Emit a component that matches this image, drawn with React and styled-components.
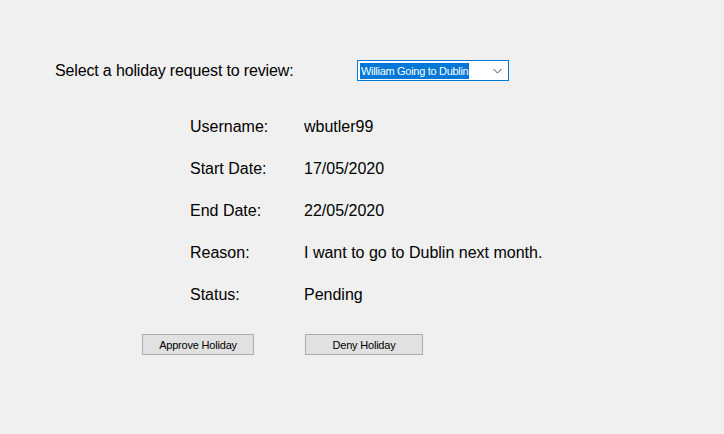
import { Fragment } from "react";
import styled, { createGlobalStyle } from "styled-components";

const GlobalStyle = createGlobalStyle`
  html, body {
    margin: 0;
    padding: 0;
    background: #f0f0f0;
  }
  body {
    font-family: "Liberation Sans", Arial, sans-serif;
    color: #000;
  }
`;

const Form = styled.div`
  width: 724px;
  height: 434px;
  box-sizing: border-box;
  padding: 60px 0 0 55px;
  background: #f0f0f0;
`;

const HeaderRow = styled.div`
  display: flex;
  align-items: center;
  height: 21px;
`;

const Label = styled.span`
  font-size: 16px;
  line-height: 21px;
  white-space: nowrap;
`;

const PromptLabel = styled(Label)`
  width: 302px;
  letter-spacing: -0.15px;
`;

const Combo = styled.div`
  display: flex;
  align-items: center;
  justify-content: space-between;
  width: 152px;
  height: 21px;
  box-sizing: border-box;
  border: 1px solid #0078d7;
  background: #fff;
  padding: 0 6px 0 2px;
`;

const Selected = styled.span`
  background: #0078d7;
  color: #fff;
  font-size: 11px;
  letter-spacing: -0.3px;
  line-height: 16px;
  padding: 0 1px;
  white-space: nowrap;
`;

const Details = styled.div`
  display: grid;
  grid-template-columns: 114px auto;
  grid-auto-rows: 42px;
  align-items: center;
  margin: 24px 0 0 135px;
`;

const ButtonRow = styled.div`
  display: flex;
  gap: 51px;
  margin: 19px 0 0 87px;
`;

const Button = styled.button`
  width: ${(p) => p.$w}px;
  height: 21px;
  box-sizing: border-box;
  border: 1px solid #adadad;
  background: #e1e1e1;
  font-family: "Liberation Sans", Arial, sans-serif;
  font-size: 11px;
  letter-spacing: -0.2px;
  color: #000;
  padding: 0;
`;

const rows = [
  ["Username:", "wbutler99"],
  ["Start Date:", "17/05/2020"],
  ["End Date:", "22/05/2020"],
  ["Reason:", "I want to go to Dublin next month."],
  ["Status:", "Pending"],
];

function Chevron() {
  return (
    <svg width="9" height="6" viewBox="0 0 9 6">
      <path d="M0.5 1 L4.5 5 L8.5 1" fill="none" stroke="#444" strokeWidth="1" />
    </svg>
  );
}

export default function App() {
  return (
    <Form>
      <GlobalStyle />
      <HeaderRow>
        <PromptLabel>Select a holiday request to review:</PromptLabel>
        <Combo>
          <Selected>William Going to Dublin</Selected>
          <Chevron />
        </Combo>
      </HeaderRow>
      <Details>
        {rows.map(([k, v]) => (
          <Fragment key={k}>
            <Label>{k}</Label>
            <Label>{v}</Label>
          </Fragment>
        ))}
      </Details>
      <ButtonRow>
        <Button $w={112}>Approve Holiday</Button>
        <Button $w={118}>Deny Holiday</Button>
      </ButtonRow>
    </Form>
  );
}
